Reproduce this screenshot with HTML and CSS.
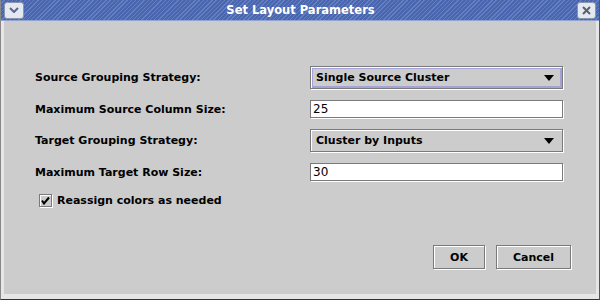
FILE: index.html
```html
<!DOCTYPE html>
<html lang="en">
<head>
  <meta charset="UTF-8">
  <title>Set Layout Parameters</title>
  <link rel="stylesheet" href="styles.css">
</head>
<body>
  <div class="window">
    <div class="titlebar">
      <div class="tb-btn menu-btn">
        <svg width="10" height="6" viewBox="0 0 10 6"><path d="M1 1 L5 5 L9 1" fill="none" stroke="#5a6690" stroke-width="2"/></svg>
      </div>
      <div class="title">Set Layout Parameters</div>
      <div class="tb-btn close-btn">
        <svg width="9" height="9" viewBox="0 0 9 9"><path d="M1 1 L8 8 M8 1 L1 8" stroke="#5a6070" stroke-width="2"/></svg>
      </div>
    </div>

    <div class="content">
      <div class="form">
        <label>Source Grouping Strategy:</label>
        <div class="combo focused"><span>Single Source Cluster</span><i class="arrow"></i></div>

        <label>Maximum Source Column Size:</label>
        <div class="field">25</div>

        <label>Target Grouping Strategy:</label>
        <div class="combo"><span>Cluster by Inputs</span><i class="arrow"></i></div>

        <label>Maximum Target Row Size:</label>
        <div class="field">30</div>
      </div>

      <div class="check-row">
        <span class="checkbox">
          <svg width="9" height="9" viewBox="0 0 9 9"><path d="M1 4.5 L3 7.5 L8 1.5" fill="none" stroke="#000" stroke-width="2"/></svg>
        </span>
        <span>Reassign colors as needed</span>
      </div>

      <div class="buttons">
        <button class="ok">OK</button>
        <button class="cancel">Cancel</button>
      </div>
    </div>
  </div>
</body>
</html>
```

FILE: styles.css
```css
body { margin: 0; background: #cccccc; font-family: "DejaVu Sans", sans-serif; }

.window {
  width: 600px;
  height: 300px;
  box-sizing: border-box;
  display: flex;
  flex-direction: column;
  background: #e6e6e6;
  border-left: 1px solid #888;
  border-right: 1px solid #555;
  border-bottom: 1px solid #333;
}

.titlebar {
  height: 21px;
  display: flex;
  align-items: center;
  background: repeating-linear-gradient(-45deg, #4a66ae 0, #4a66ae 2px, #6480c2 2px, #6480c2 3px);
  border-bottom: 1px solid #8fa4d2;
  box-sizing: border-box;
}

.tb-btn {
  width: 19px;
  height: 17px;
  box-sizing: border-box;
  background: #e4e8f0;
  border: 1px solid #8a95ad;
  border-radius: 3px;
  display: flex;
  align-items: center;
  justify-content: center;
}
.menu-btn { margin-left: 3px; width: 20px; }
.close-btn { margin-right: 3px; }

.title {
  flex: 1;
  text-align: center;
  color: #fff;
  font-weight: bold;
  font-size: 11.5px;
}

.content {
  flex: 1;
  margin: 0 3px 5px 3px;
  background: #cccccc;
  padding: 45px 33px 0 31px;
  font-size: 11px;
  font-weight: bold;
  color: #000;
}

.form {
  display: grid;
  grid-template-columns: 275px 253px;
  row-gap: 11px;
  align-items: center;
}

.combo {
  height: 23px;
  box-sizing: border-box;
  border: 1px solid #7a7a7a;
  box-shadow: inset 1px 1px 0 #fff, 1px 1px 0 #fff;
  display: flex;
  align-items: center;
  justify-content: space-between;
  padding: 0 6px 0 5px;
}
.combo.focused { box-shadow: inset 1px 1px 0 #fff, 1px 1px 0 #fff, inset 0 0 0 2px #a3a3d9; }

.arrow {
  width: 0;
  height: 0;
  border-left: 5px solid transparent;
  border-right: 5px solid transparent;
  border-top: 6px solid #000;
  margin-right: 2px;
}

.field {
  height: 18px;
  box-sizing: border-box;
  background: #fff;
  border: 1px solid #7a7a7a;
  box-shadow: 1px 1px 0 #fff;
  padding: 0 2px;
  font-weight: normal;
  font-size: 12px;
  line-height: 16px;
}

.check-row {
  display: flex;
  align-items: center;
  gap: 5px;
  margin: 13px 0 0 4px;
}

.checkbox {
  width: 13px;
  height: 13px;
  box-sizing: border-box;
  border: 1px solid #7a7a7a;
  box-shadow: inset 1px 1px 0 #fff, 1px 1px 0 #fff;
  display: flex;
  align-items: center;
  justify-content: center;
}

.buttons {
  display: flex;
  justify-content: flex-end;
  gap: 11px;
  margin-top: 38px;
  margin-right: -8px;
}

button {
  height: 24px;
  box-sizing: border-box;
  background: #cccccc;
  border: 1px solid #7a7a7a;
  box-shadow: inset 1px 1px 0 #fff, 1px 1px 0 #fff;
  font-family: "DejaVu Sans", sans-serif;
  font-weight: bold;
  font-size: 11px;
  padding: 0;
}
.ok { width: 52px; }
.cancel { width: 75px; }
```
